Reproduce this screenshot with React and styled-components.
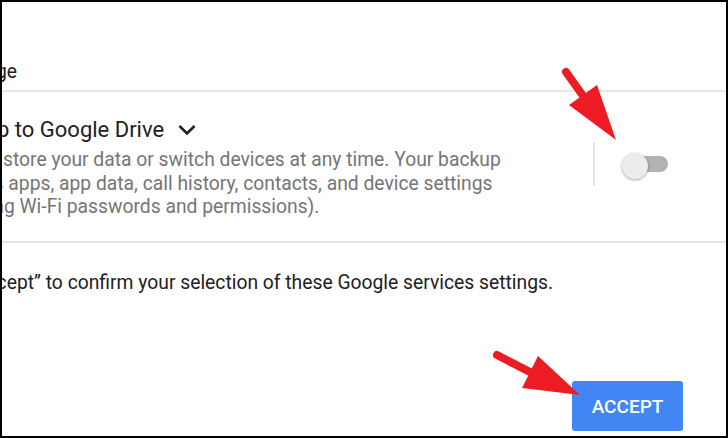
import React from "react";
import styled, { createGlobalStyle } from "styled-components";

const Global = createGlobalStyle`
  html, body { margin: 0; padding: 0; background: #fff; }
  body { font-family: Roboto, "Noto Sans", Arial, sans-serif; }
`;

const Frame = styled.div`
  position: relative;
  width: 728px;
  height: 438px;
  box-sizing: border-box;
  border: 2px solid #000;
  overflow: hidden;
  background: #fff;
  display: flex;
  flex-direction: column;
  font-family: Roboto, "Noto Sans", Arial, sans-serif;
`;

const Line = styled.div`
  margin-left: ${(p) => p.$shift || 0}px;
  white-space: nowrap;
  font-size: 19.3px;
  line-height: 24px;
  color: #212121;
`;

const SectionHeader = styled(Line)`
  padding: 58px 0 6px;
`;

const Divider = styled.div`
  flex-shrink: 0;
  height: 2px;
  background: #e6e6e6;
`;

const SettingRow = styled.div`
  display: flex;
  align-items: flex-start;
  padding: 24px 0 22.5px;
`;

const TextCol = styled.div`
  flex: none;
  width: 591px;
  display: flex;
  flex-direction: column;
`;

const TitleRow = styled.div`
  display: flex;
  align-items: center;
  margin-left: ${(p) => p.$shift || 0}px;
  height: 28px;
  margin-bottom: 4px;
`;

const Title = styled.span`
  font-size: 22px;
  line-height: 28px;
  color: #212121;
  white-space: nowrap;
`;

const Chevron = styled.svg`
  display: block;
  margin-left: 14px;
  flex: none;
`;

const DescLine = styled(Line)`
  color: #757575;
  line-height: 23.5px;
`;

const ToggleCell = styled.div`
  flex: none;
  margin-top: 26px;
  height: 44px;
  border-left: 2px solid #e4e4e4;
  padding-left: 35px;
  display: flex;
  align-items: center;
`;

const SwitchTrack = styled.div`
  width: 38px;
  height: 16px;
  border-radius: 8px;
  background: #b2b2b2;
  display: flex;
  align-items: center;
`;

const SwitchThumb = styled.div`
  width: 26px;
  height: 26px;
  flex: none;
  margin-left: -8px;
  margin-top: 3px;
  border-radius: 50%;
  background: #ececec;
  box-shadow: 0 1px 3px rgba(0, 0, 0, 0.35);
`;

const FooterLine = styled(Line)`
  margin-top: 28px;
`;

const ButtonRow = styled.div`
  margin-top: auto;
  display: flex;
  justify-content: flex-end;
  padding: 0 43px 5px 0;
`;

const AcceptButton = styled.button`
  width: 111px;
  height: 50px;
  border: none;
  border-radius: 3px;
  background: #4285f4;
  color: #fff;
  font-family: Roboto, "Noto Sans", Arial, sans-serif;
  font-weight: 500;
  font-size: 19px;
  padding: 0;
  cursor: pointer;
`;

const Annotations = styled.svg`
  position: absolute;
  top: -2px;
  left: -2px;
  width: 728px;
  height: 438px;
  pointer-events: none;
`;

const RED = "#ed1c24";

export default function App() {
  return (
    <>
      <Global />
      <Frame>
        <SectionHeader $shift={-6}>ge</SectionHeader>
        <Divider />
        <SettingRow>
          <TextCol>
            <TitleRow $shift={-5}>
              <Title>p to Google Drive</Title>
              <Chevron width="18" height="12" viewBox="0 0 18 12">
                <polyline
                  points="1.5,2 9,9.5 16.5,2"
                  fill="none"
                  stroke="#212121"
                  strokeWidth="2.6"
                />
              </Chevron>
            </TitleRow>
            <DescLine $shift={1}>
              store your data or switch devices at any time. Your backup
            </DescLine>
            <DescLine $shift={-8.4}>
              s apps, app data, call history, contacts, and device settings
            </DescLine>
            <DescLine $shift={-8.75}>
              ng Wi-Fi passwords and permissions).
            </DescLine>
          </TextCol>
          <ToggleCell>
            <SwitchTrack>
              <SwitchThumb />
            </SwitchTrack>
          </ToggleCell>
        </SettingRow>
        <Divider />
        <FooterLine $shift={-5.4}>
          cept” to confirm your selection of these Google services settings.
        </FooterLine>
        <ButtonRow>
          <AcceptButton>ACCEPT</AcceptButton>
        </ButtonRow>
        <Annotations viewBox="0 0 728 438">
          <line x1="566" y1="72" x2="586" y2="100" stroke={RED} strokeWidth="8" strokeLinecap="round" />
          <polygon points="616,140 569,105 597,85" fill={RED} />
          <line x1="497" y1="355" x2="532" y2="373" stroke={RED} strokeWidth="8" strokeLinecap="round" />
          <polygon points="580,395 538,356 522,388" fill={RED} />
        </Annotations>
      </Frame>
    </>
  );
}
